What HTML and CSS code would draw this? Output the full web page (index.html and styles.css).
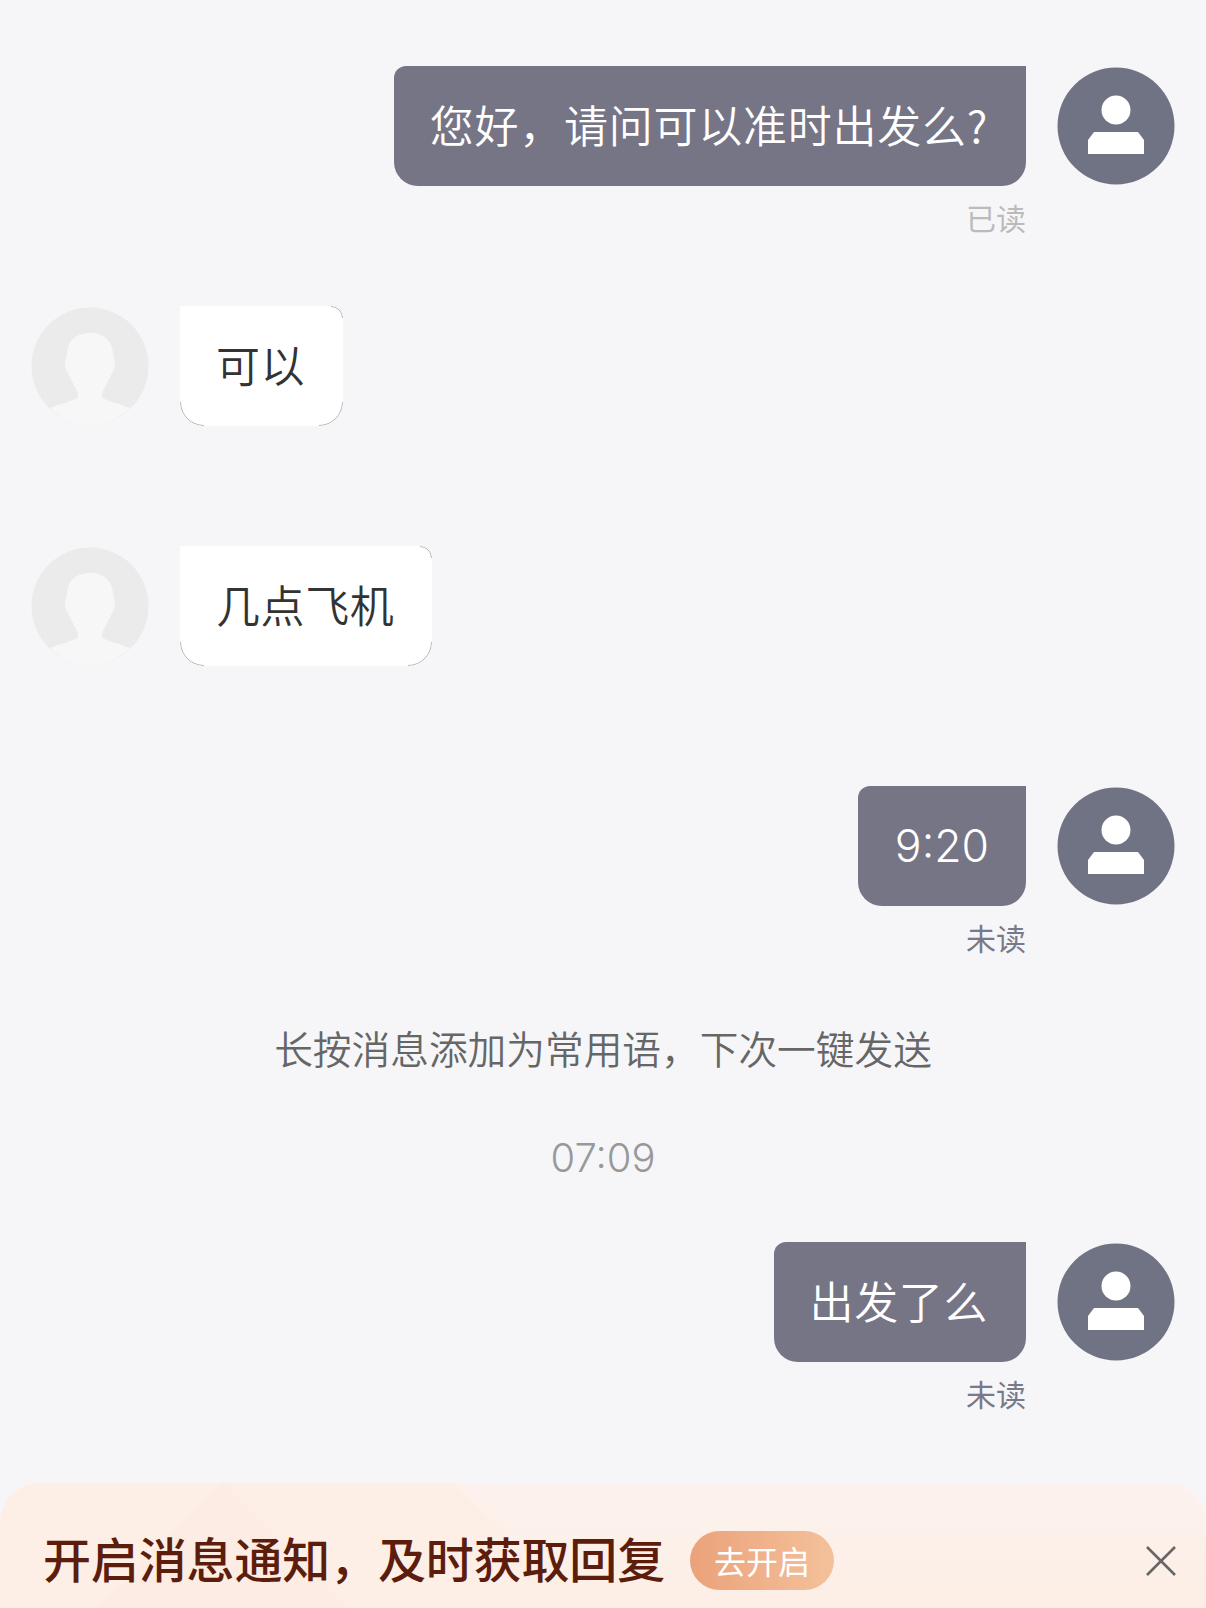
FILE: index.html
```html
<!DOCTYPE html>
<html lang="zh-CN">
<head>
    <meta charset="UTF-8">
    <meta name="viewport" content="width=device-width, initial-scale=1.0">
    <title>Chat</title>
    <link rel="stylesheet" href="styles.css">
</head>
<body>
    <svg class="icon-defs" width="0" height="0">
        <defs>
            <symbol id="me" viewBox="0 0 118 118">
                <circle cx="59" cy="59" r="58.5" fill="#707384"/>
                <circle cx="59" cy="43" r="14.5" fill="#fff"/>
                <path d="M37 65H81L87 73V87H31V73Z" fill="#fff"/>
            </symbol>
            <symbol id="them" viewBox="0 0 118 118">
                <circle cx="59" cy="59" r="58.5" fill="#ebebeb"/>
                <path d="M59 26C47 26 37 32 36 46L35 52C33 56 34 62 37 66L44 80C47 85 48 89 46 91C44 93 32 96 19 101C31 112 45 118 59 118C73 118 87 112 99 101C86 96 74 93 72 91C70 89 71 85 74 80L81 66C84 62 85 56 83 52L82 46C81 32 71 26 59 26Z" fill="#f7f7f7"/>
            </symbol>
        </defs>
    </svg>

    <div class="chat">
        <div class="msg sent">
            <div class="stack">
                <div class="bubble long">您好，请问可以准时出发么?</div>
                <div class="status read">已读</div>
            </div>
            <svg class="avatar"><use href="#me"/></svg>
        </div>

        <div class="msg received first">
            <svg class="avatar"><use href="#them"/></svg>
            <div class="bubble">可以</div>
        </div>

        <div class="msg received">
            <svg class="avatar"><use href="#them"/></svg>
            <div class="bubble">几点飞机</div>
        </div>

        <div class="msg sent after-received">
            <div class="stack">
                <div class="bubble num">9:20</div>
                <div class="status">未读</div>
            </div>
            <svg class="avatar"><use href="#me"/></svg>
        </div>

        <div class="hint">长按消息添加为常用语，下次一键发送</div>
        <div class="time">07:09</div>

        <div class="msg sent last">
            <div class="stack">
                <div class="bubble">出发了么</div>
                <div class="status">未读</div>
            </div>
            <svg class="avatar"><use href="#me"/></svg>
        </div>
    </div>

    <div class="notify">
        <svg class="notify-bg" viewBox="0 0 1206 125" preserveAspectRatio="none">
            <polygon points="0,0 454,0 579,125 0,125" fill="#fdeee6"/>
            <polygon points="223,0 98,125 348,125" fill="#fdece3"/>
        </svg>
        <span class="notify-text">开启消息通知，及时获取回复</span>
        <span class="notify-btn">去开启</span>
        <svg class="notify-close" viewBox="0 0 32 32">
            <path d="M2 2L30 30M30 2L2 30" fill="none" stroke="#666" stroke-width="2.6"/>
        </svg>
    </div>
</body>
</html>
```

FILE: styles.css
```css
body {
    font-family: "Noto Sans CJK SC", "Noto Sans", sans-serif;
    background-color: #f6f6f9;
    margin: 0;
    padding: 0;
    height: 1608px;
    overflow: hidden;
    display: flex;
    flex-direction: column;
}

.icon-defs { position: absolute; }

.chat {
    flex: 1;
    padding: 66px 31px 0;
}

.msg {
    display: flex;
    align-items: flex-start;
    gap: 31px;
}

.sent { justify-content: flex-end; }
.received { margin-top: 120px; }
.received.first { margin-top: 70px; }
.after-received { margin-top: 120px; }
.last { margin-top: 59px; }

.avatar {
    width: 118px;
    height: 118px;
    margin-top: 1px;
    flex-shrink: 0;
}

.stack {
    display: flex;
    flex-direction: column;
    align-items: flex-end;
}

.bubble {
    position: relative;
    height: 120px;
    box-sizing: border-box;
    padding: 0 38px 0 36px;
    font-size: 44px;
    letter-spacing: 0.6px;
    line-height: 116px;
    white-space: nowrap;
    font-weight: 350;
}

.bubble.long { letter-spacing: 0.75px; }

.sent .bubble {
    background-color: #767586;
    color: #fff;
    border-radius: 12px 0 24px 24px;
}

.received .bubble {
    background-color: #fff;
    color: #333;
    border-radius: 0 12px 24px 24px;
}

/* thin grey arc, only visible on the rounded corners */
.received .bubble::after {
    content: "";
    position: absolute;
    inset: 0;
    border: 1px solid rgba(0, 0, 0, 0.3);
    border-radius: inherit;
    -webkit-mask:
        linear-gradient(#000, #000) left bottom / 24px 24px no-repeat,
        linear-gradient(#000, #000) right bottom / 24px 24px no-repeat,
        linear-gradient(#000, #000) right top / 12px 12px no-repeat;
    mask:
        linear-gradient(#000, #000) left bottom / 24px 24px no-repeat,
        linear-gradient(#000, #000) right bottom / 24px 24px no-repeat,
        linear-gradient(#000, #000) right top / 12px 12px no-repeat;
}

.bubble.num {
    font-family: Inter, sans-serif;
    font-size: 44.5px;
    font-weight: 300;
    letter-spacing: 0;
    padding: 0 37px;
    line-height: 120px;
}

.status {
    margin-top: 12px;
    font-size: 30px;
    line-height: 38px;
    color: #777a8a;
}

.status.read { color: #bbb; }

.hint {
    margin-top: 63px;
    text-align: center;
    font-size: 38.7px;
    font-weight: 350;
    line-height: 56px;
    color: #666;
}

.time {
    margin-top: 58px;
    text-align: center;
    font-family: Inter, sans-serif;
    font-size: 40px;
    font-weight: 300;
    line-height: 50px;
    color: #999;
}

.notify {
    position: relative;
    box-sizing: border-box;
    height: 125px;
    display: flex;
    align-items: flex-end;
    padding: 0 29px 18px 43px;
    background: linear-gradient(180deg, #fcf2ed, #fdeee6);
    border-radius: 40px 40px 0 0;
    overflow: hidden;
}

.notify-bg {
    position: absolute;
    left: 0;
    top: 0;
    width: 100%;
    height: 100%;
}

.notify-text {
    position: relative;
    font-size: 48px;
    font-weight: 500;
    letter-spacing: -0.15px;
    line-height: 60px;
    margin-bottom: 3px;
    color: #5c1d0c;
}

.notify-btn {
    position: relative;
    margin-left: 25px;
    width: 144px;
    height: 59px;
    border-radius: 30px;
    background: linear-gradient(90deg, #eba27a, #f4c19b);
    color: #fff;
    font-size: 32px;
    line-height: 59px;
    text-align: center;
}

.notify-close {
    position: relative;
    margin-left: auto;
    width: 32px;
    height: 32px;
    margin-bottom: 13px;
}
```
